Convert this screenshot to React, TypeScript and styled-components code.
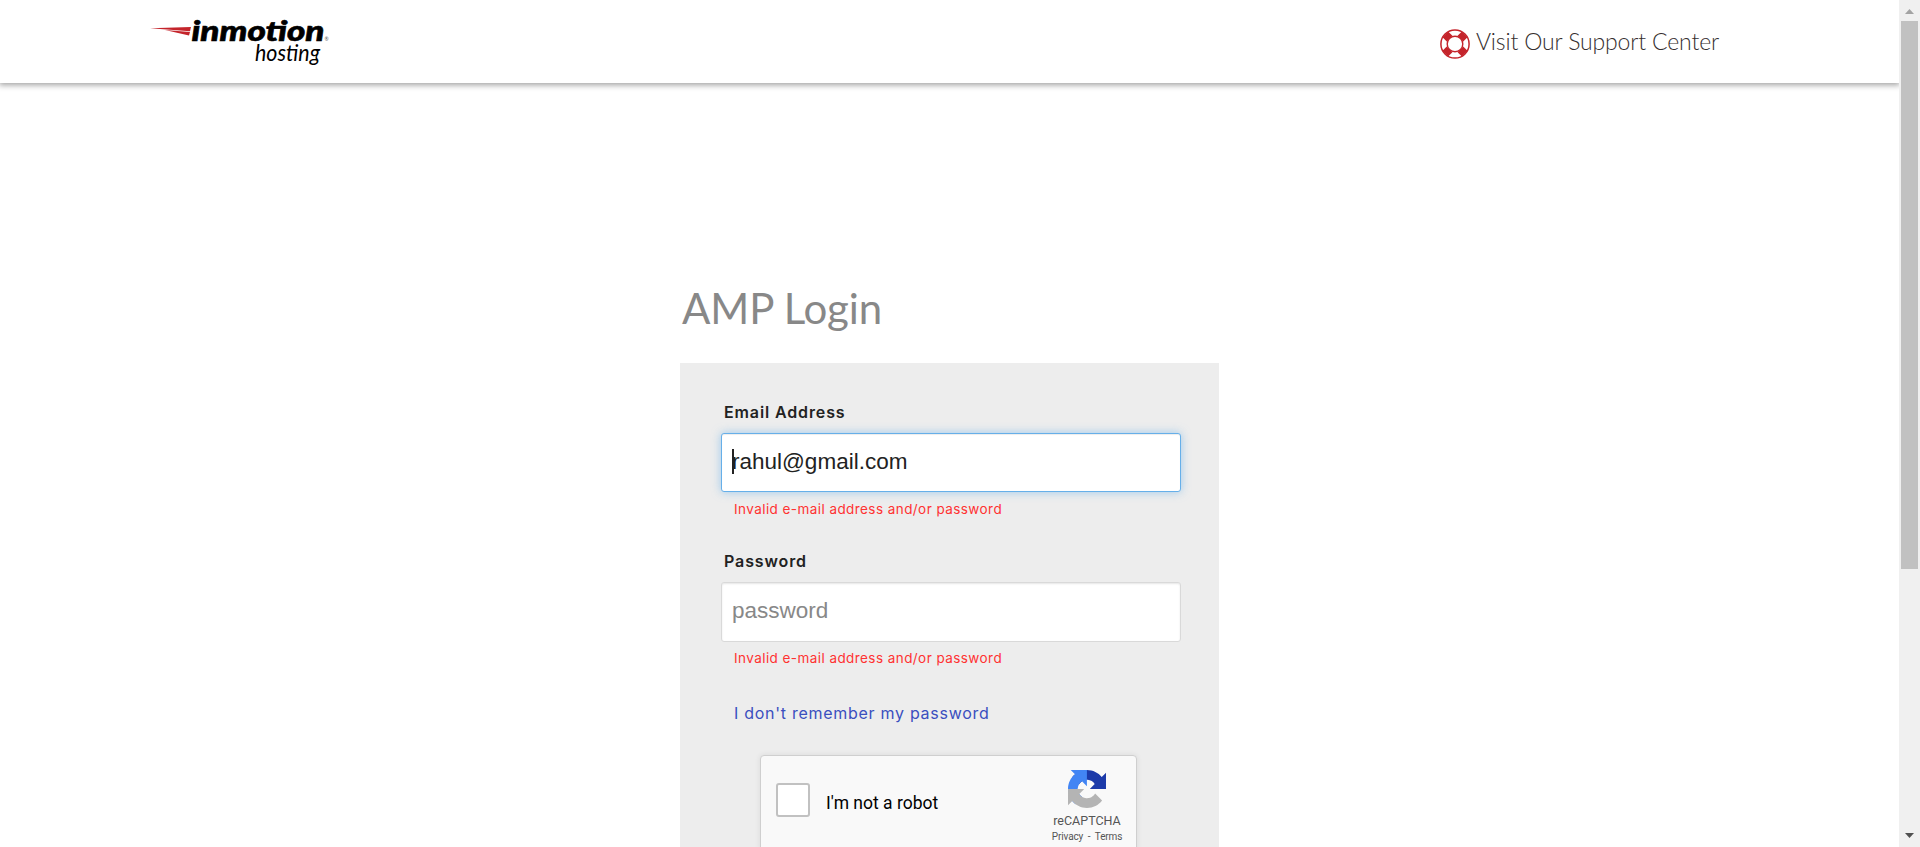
import React from "react";
import styled, { createGlobalStyle } from "styled-components";

const GlobalStyle = createGlobalStyle`
  *, *::before, *::after { box-sizing: border-box; }
  body { margin: 0; background: #fff; overflow: hidden; }
`;

const Viewport = styled.div`
  display: flex;
  height: 847px;
  overflow: hidden;
`;

const Page = styled.div`
  flex: 1;
  display: flex;
  flex-direction: column;
  align-items: center;
  overflow: hidden;
`;

const Header = styled.header`
  width: 100%;
  height: 83px;
  flex: none;
  display: flex;
  justify-content: space-between;
  align-items: flex-start;
  padding: 15px 180px 0 149px;
  background: #fff;
  box-shadow: 0 1px 6px 1px rgba(0, 0, 0, 0.38);
`;

const SupportLink = styled.a`
  display: flex;
  align-items: center;
  gap: 6px;
  height: 57px;
  color: #362f2f;
  font: 300 23px/28px Lato, sans-serif;
  letter-spacing: -0.15px;
  white-space: nowrap;
`;

const SupportText = styled.span`
  padding-bottom: 5px;
`;

const Login = styled.main`
  width: 539px;
  padding-top: 195px;
`;

const Title = styled.h1`
  margin: 0;
  padding-left: 2px;
  height: 85px;
  color: #888;
  font: 400 42px/60px Lato, sans-serif;
  white-space: nowrap;
  letter-spacing: -0.15px;
`;

const Panel = styled.section`
  height: 600px;
  padding: 36px 38px 0 41px;
  background: #ededed;
`;

const Field = styled.div`
  height: 149px;
`;

const Label = styled.label`
  display: block;
  height: 34px;
  padding-left: 3px;
  color: #222;
  font: 600 16px/26px Inter, sans-serif;
  letter-spacing: 0.88px;
`;

const Input = styled.div<{ $focused?: boolean; $placeholder?: boolean }>`
  display: flex;
  align-items: center;
  height: ${(p) => (p.$focused ? 59 : 60)}px;
  padding: 0 10px 2px;
  background: #fff;
  border: 1px solid ${(p) => (p.$focused ? "#66afe9" : "#d9d9d9")};
  border-radius: 3px;
  box-shadow: ${(p) =>
    p.$focused
      ? "inset 0 1px 1px rgba(0,0,0,.075), 0 0 10px rgba(102,175,233,.6)"
      : "inset 0 1px 2px rgba(0,0,0,.1)"};
  color: ${(p) => (p.$placeholder ? "#888" : "#222")};
  font: 22.5px/26px "Liberation Sans", sans-serif;
`;

const Caret = styled.i`
  width: 2px;
  height: 25px;
  margin-right: -2px;
  background: #222;
`;

const ErrorText = styled.p<{ $tight?: boolean }>`
  margin: 0;
  padding: ${(p) => (p.$tight ? 5 : 6)}px 0 0 13px;
  color: #ff3232;
  font: 400 13.5px/22px Inter, sans-serif;
  letter-spacing: 0.43px;
  white-space: nowrap;
`;

const Forgot = styled.a`
  display: block;
  height: 58px;
  padding: 4px 0 0 13px;
  color: #3a4fbf;
  font: 400 16px/24px Inter, sans-serif;
  letter-spacing: 0.72px;
  white-space: nowrap;
`;

const Captcha = styled.div`
  display: flex;
  width: 377px;
  height: 96px;
  margin-left: 39px;
  padding: 14px 14px 0 15px;
  background: #f9f9f9;
  border: 1px solid #cfcfcf;
  border-radius: 4px;
  box-shadow: 0 0 5px 1px rgba(0, 0, 0, 0.06);
  font-family: Roboto, sans-serif;
`;

const Checkbox = styled.div`
  width: 34px;
  height: 34px;
  margin: 13px 16px 0 0;
  background: #fff;
  border: 2px solid #c1c1c1;
  border-radius: 3px;
`;

const CaptchaLabel = styled.span`
  flex: 1;
  padding-top: 22px;
  color: #000;
  font-size: 17.5px;
  line-height: 22px;
`;

const Brand = styled.div`
  display: flex;
  flex-direction: column;
  align-items: center;
  width: 70px;
  color: #555;
`;

const BrandName = styled.span`
  margin-top: 6px;
  font-size: 12.5px;
  line-height: 14px;
`;

const Terms = styled.span`
  margin-top: 3px;
  font-size: 10px;
  line-height: 12px;
  letter-spacing: -0.15px;
  white-space: pre;
`;

const Scrollbar = styled.aside`
  display: flex;
  flex-direction: column;
  align-items: center;
  width: 21px;
  height: 847px;
  padding: 9px 0;
  background: #f0f0f0;
`;

const Thumb = styled.div`
  width: 17px;
  height: 548px;
  margin: 7px 0 auto;
  background: #c1c1c1;
`;

function Logo() {
  return (
    <svg width="182" height="55" viewBox="149 15 182 55">
      <path d="M150 28.3L191 27L190 31.2Z" fill="#c4242b" />
      <path d="M165 30L190 32L189 35.6Z" fill="#c4242b" />
      <text x="191.5" y="40.5" fontFamily="Lato, sans-serif" fontWeight="900" fontStyle="italic" fontSize="27.5" stroke="#000" strokeWidth="0.6" textLength="133" lengthAdjust="spacingAndGlyphs">inmotion</text>
      <text x="255" y="60.5" fontFamily="Lato, sans-serif" fontStyle="italic" fontSize="22.5" textLength="65" lengthAdjust="spacingAndGlyphs">hosting</text>
      <text x="324.5" y="41" fontFamily="Lato, sans-serif" fontSize="5" fill="#555">®</text>
    </svg>
  );
}

function LifeRing() {
  return (
    <svg width="30" height="30" viewBox="-15 -15 30 30" fill="none" stroke="#c4242b">
      <path d="M-9.7 -9.7L-5.4 -5.4M9.7 -9.7L5.4 -5.4M-9.7 9.7L-5.4 5.4M9.7 9.7L5.4 5.4" strokeWidth="8" />
      <circle r="14.1" strokeWidth="1.5" />
      <circle r="7.8" strokeWidth="1.4" fill="#fff" />
    </svg>
  );
}

function RecaptchaMark() {
  return (
    <svg width="38" height="38" viewBox="0 0 64 64">
      <path fill="#1c3aa9" d="M64 31.955l-.033-1.37V4.687l-7.16 7.16C50.948 4.674 42.033.093 32.05.093c-10.4 0-19.622 4.96-25.458 12.64l11.736 11.86a15.55 15.55 0 0 1 4.754-5.334c2.05-1.6 4.952-2.906 8.968-2.906.485 0 .86.057 1.135.163 4.976.393 9.288 3.14 11.828 7.124l-8.307 8.307L64 31.953" />
      <path fill="#4285f4" d="M31.862.094l-1.37.033H4.594l7.16 7.16C4.58 13.147 0 22.06 0 32.046c0 10.4 4.96 19.622 12.64 25.458L24.5 45.768a15.55 15.55 0 0 1-5.334-4.754c-1.6-2.05-2.906-4.952-2.906-8.968 0-.485.057-.86.163-1.135.393-4.976 3.14-9.288 7.124-11.828l8.307 8.307L31.86.095" />
      <path fill="#b4b4b4" d="M.001 32.045l.033 1.37v25.898l7.16-7.16c5.86 7.173 14.774 11.754 24.76 11.754 10.4 0 19.622-4.96 25.458-12.64l-11.736-11.86a15.55 15.55 0 0 1-4.754 5.334c-2.05 1.6-4.952 2.906-8.968 2.906-.485 0-.86-.057-1.135-.163-4.976-.393-9.288-3.14-11.828-7.124l8.307-8.307c-10.522.04-22.4.066-27.295-.005" />
    </svg>
  );
}

export default function App() {
  return (
    <Viewport>
      <GlobalStyle />
      <Page>
        <Header>
          <Logo />
          <SupportLink>
            <LifeRing />
            <SupportText>Visit Our Support Center</SupportText>
          </SupportLink>
        </Header>
        <Login>
          <Title>AMP Login</Title>
          <Panel>
            <Field>
              <Label>Email Address</Label>
              <Input $focused>
                <Caret />
                rahul@gmail.com
              </Input>
              <ErrorText>Invalid e-mail address and/or password</ErrorText>
            </Field>
            <Field>
              <Label>Password</Label>
              <Input $placeholder>password</Input>
              <ErrorText $tight>Invalid e-mail address and/or password</ErrorText>
            </Field>
            <Forgot>I don't remember my password</Forgot>
            <Captcha>
              <Checkbox />
              <CaptchaLabel>I'm not a robot</CaptchaLabel>
              <Brand>
                <RecaptchaMark />
                <BrandName>reCAPTCHA</BrandName>
                <Terms>Privacy  -  Terms</Terms>
              </Brand>
            </Captcha>
          </Panel>
        </Login>
      </Page>
      <Scrollbar>
        <svg width="9" height="5" viewBox="0 0 9 5"><path d="M0 5L4.5 0L9 5Z" fill="#a3a3a3" /></svg>
        <Thumb />
        <svg width="9" height="5" viewBox="0 0 9 5"><path d="M0 0H9L4.5 5Z" fill="#505050" /></svg>
      </Scrollbar>
    </Viewport>
  );
}
